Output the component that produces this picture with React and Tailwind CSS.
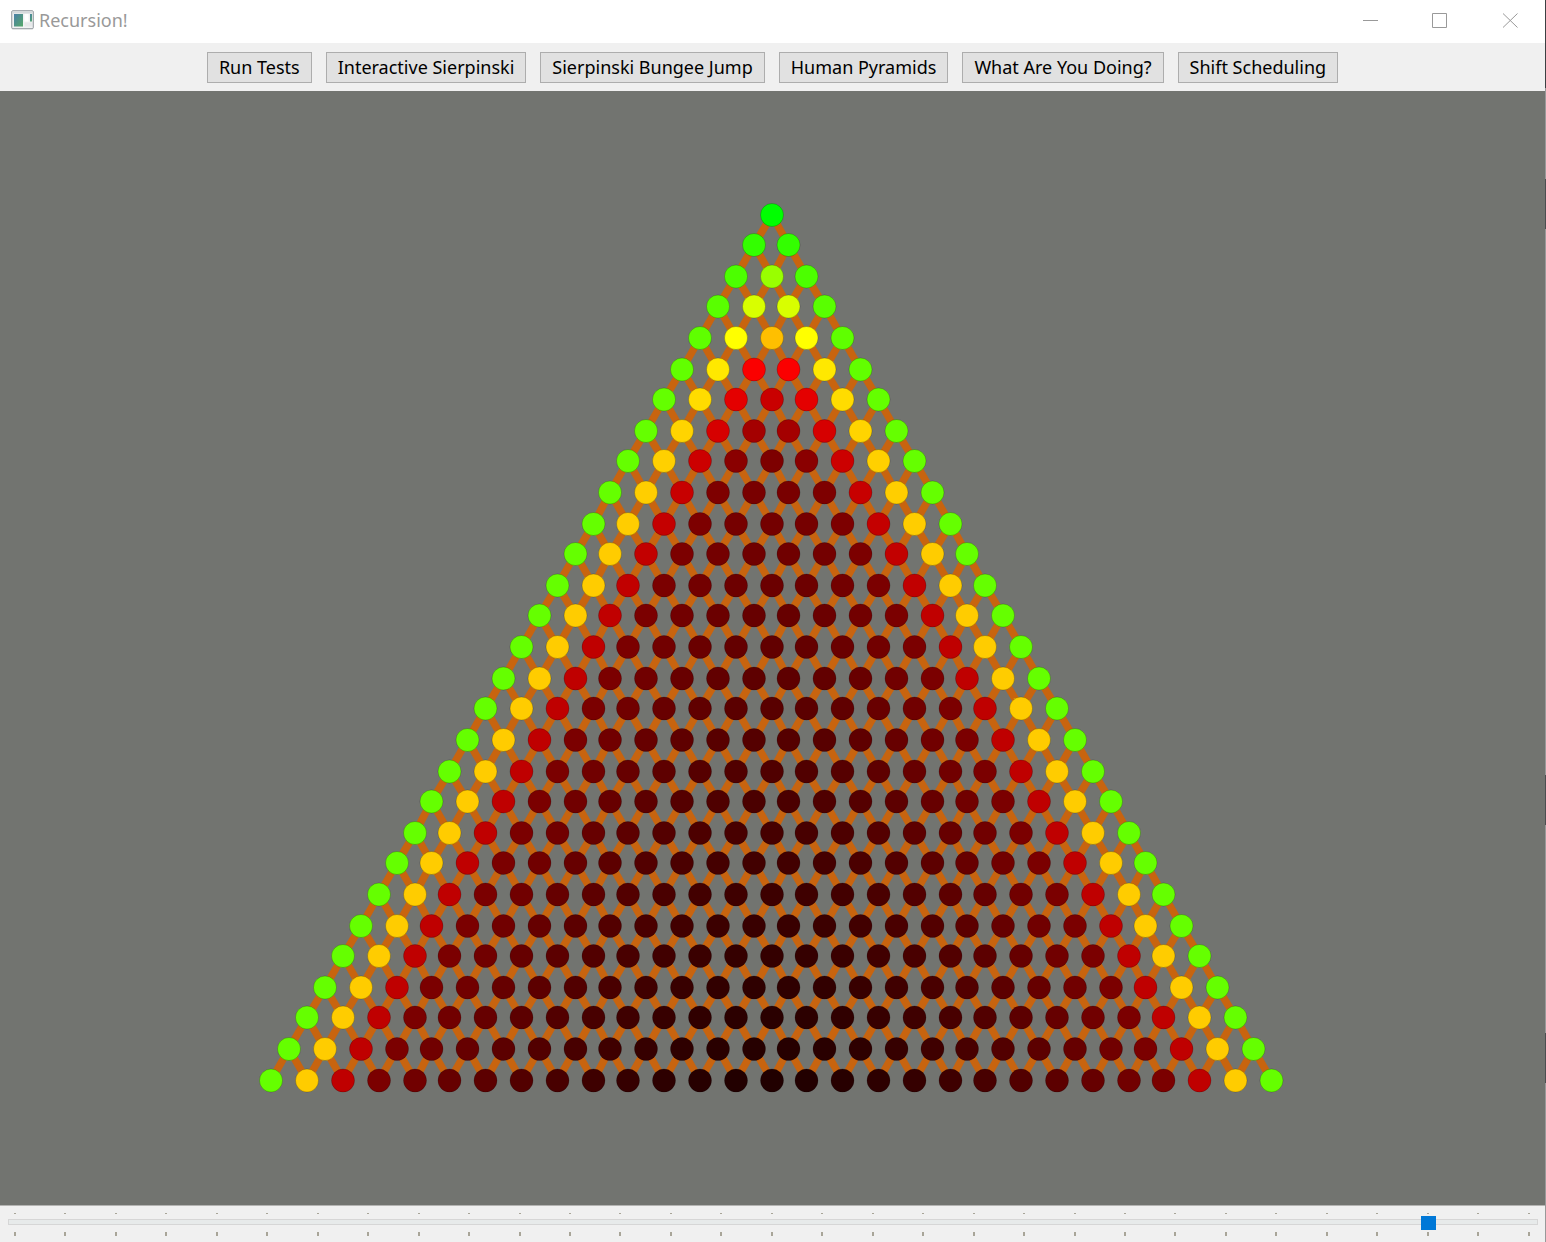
const ACTIONS = [
  'Run Tests',
  'Interactive Sierpinski',
  'Sierpinski Bungee Jump',
  'Human Pyramids',
  'What Are You Doing?',
  'Shift Scheduling',
];

const MAX_ROWS = 30;
const ROWS = 28;

// Weight carried by each person, in multiples of one body weight.
function computeLoads(rows) {
  const loads = [[0]];
  for (let r = 1; r <= rows; r++) {
    const above = loads[r - 1];
    const row = [];
    for (let c = 0; c <= r; c++) {
      const left = c > 0 ? (1 + above[c - 1]) / 2 : 0;
      const right = c < r ? (1 + above[c]) / 2 : 0;
      row.push(left + right);
    }
    loads.push(row);
  }
  return loads;
}

function loadColor(load) {
  if (load <= 2.5) return `rgb(${Math.floor((load / 2.5) * 255)}, 255, 0)`;
  if (load <= 3.75) return `rgb(255, ${Math.floor(255 - ((load - 2.5) / 1.25) * 127)}, 0)`;
  if (load <= 6.25) return `rgb(${Math.floor(255 - ((load - 3.75) / 2.5) * 127)}, 0, 0)`;
  return `rgb(${Math.max(0, Math.floor(127 - ((load - 6.25) / 25) * 127))}, 0, 0)`;
}

// Positions snap to a 1.5x pixel grid.
function nodePosition(r, c) {
  const k = 2 * c - r;
  return {
    x: 772 + 1.5 * (12 * k - Math.ceil(k / 10)),
    y: 124 + 1.5 * Math.floor(20.613 * r),
  };
}

function Pyramid() {
  const nodes = computeLoads(ROWS).flatMap((row, r) =>
    row.map((load, c) => ({ r, c, load, ...nodePosition(r, c) }))
  );
  const links = nodes
    .filter((n) => n.r < ROWS)
    .flatMap((n) => [n.c, n.c + 1].map((c) => ({ from: n, to: nodePosition(n.r + 1, c) })));

  return (
    <svg viewBox="0 0 1545 1114" className="h-full w-full" role="img" aria-label="Human pyramid">
      <g stroke="#c8640f" strokeWidth="7.5">
        {links.map(({ from, to }, i) => (
          <line key={i} x1={from.x} y1={from.y} x2={to.x} y2={to.y} />
        ))}
      </g>
      {nodes.map((n) => (
        <g key={`${n.r}-${n.c}`}>
          <circle cx={n.x} cy={n.y} r="11.5" fill={loadColor(n.load)} />
          <circle cx={n.x} cy={n.y} r="11.5" fill="none" stroke="#000" strokeOpacity="0.2" strokeWidth="1" />
        </g>
      ))}
    </svg>
  );
}

function AppIcon() {
  return (
    <svg width="24" height="20" viewBox="0 0 24 20" aria-hidden="true">
      <defs>
        <linearGradient id="pane" x1="0" y1="0" x2="1" y2="1">
          <stop offset="0" stopColor="#4a7fa8" />
          <stop offset="1" stopColor="#55a868" />
        </linearGradient>
      </defs>
      <rect x="0.75" y="0.75" width="21.5" height="18" rx="1" fill="#f1f2f3" stroke="#8b9298" />
      <rect x="1.5" y="1.5" width="20" height="2" fill="#d5d9dc" />
      <rect x="3" y="4" width="9" height="12.5" fill="url(#pane)" />
      <rect x="13.5" y="4" width="4" height="7.5" fill="#fff" />
      <rect x="19" y="4" width="2" height="7.5" fill="url(#pane)" />
      <rect x="13.5" y="12.5" width="7.5" height="4" fill="#e6e8ea" />
    </svg>
  );
}

function TitleBar() {
  return (
    <header className="flex h-[43px] shrink-0 items-center justify-between bg-white pb-[3px] pl-[11px]">
      <div className="flex items-center gap-1">
        <AppIcon />
        <h1 className="text-[18px] leading-6 text-[#999]">Recursion!</h1>
      </div>
      <div className="flex text-[#999]">
        <button type="button" aria-label="Minimize" className="flex h-8 w-[70px] items-center justify-center">
          <svg width="16" height="16" viewBox="0 0 16 16" stroke="currentColor" fill="none">
            <path d="M1 8.5H16" />
          </svg>
        </button>
        <button type="button" aria-label="Maximize" className="flex h-8 w-[70px] items-center justify-center">
          <svg width="16" height="16" viewBox="0 0 16 16" stroke="currentColor" fill="none">
            <path d="M0.5 1.5H14.5V15.5H0.5Z" />
          </svg>
        </button>
        <button type="button" aria-label="Close" className="flex h-8 w-[70px] items-center justify-center">
          <svg width="16" height="16" viewBox="0 0 16 16" stroke="currentColor" fill="none">
            <path d="M1 1.5L15.5 15.5M15.5 1.5L1 15.5" />
          </svg>
        </button>
      </div>
    </header>
  );
}

function RowSlider() {
  const ticks = Array.from({ length: MAX_ROWS + 1 }, (_, i) => i);
  return (
    <footer className="flex h-[37px] shrink-0 flex-col border-t border-[#b4b4b2] bg-[#f0f0f0] pt-[7px] pr-[7px] pl-2">
      <div className="flex justify-between pr-2 pl-[6px]" aria-hidden="true">
        {ticks.map((i) => (
          <span key={i} className="h-px w-[2px] bg-[#a8a598]" />
        ))}
      </div>
      <input
        type="range"
        aria-label="Pyramid rows"
        min="0"
        max={MAX_ROWS}
        defaultValue={ROWS}
        className="mt-px block h-[14px] w-full appearance-none bg-transparent [&::-webkit-slider-runnable-track]:h-[6px] [&::-webkit-slider-runnable-track]:border [&::-webkit-slider-runnable-track]:border-[#d6d6d6] [&::-webkit-slider-runnable-track]:bg-[#e7eaea] [&::-webkit-slider-thumb]:-mt-[4px] [&::-webkit-slider-thumb]:h-[14px] [&::-webkit-slider-thumb]:w-[15px] [&::-webkit-slider-thumb]:appearance-none [&::-webkit-slider-thumb]:bg-[#0078d7]"
      />
      <div className="mt-[3px] flex justify-between pr-2 pl-[6px]" aria-hidden="true">
        {ticks.map((i) => (
          <span key={i} className="h-1 w-[2px] bg-[#a8a598]" />
        ))}
      </div>
    </footer>
  );
}

// Sliver of desktop behind the window's right edge.
function DesktopEdge() {
  return (
    <div className="flex w-px flex-col bg-[#999]" aria-hidden="true">
      <div className="h-[88px] bg-[#3c4043]" />
      <div className="mt-[91px] h-[50px] bg-[#4c4e50]" />
      <div className="mt-[546px] h-[50px] bg-[#4c4e50]" />
      <div className="mt-[208px] h-[50px] bg-[#4c4e50]" />
    </div>
  );
}

export default function App() {
  return (
    <div className="flex h-screen font-['Noto_Sans','Open_Sans',sans-serif]">
      <div className="flex min-w-0 flex-1 flex-col">
        <TitleBar />
        <nav className="flex h-12 shrink-0 items-center justify-center gap-[14px] bg-[#f0f0f0]">
          {ACTIONS.map((label) => (
            <button
              key={label}
              type="button"
              className="h-[31px] border border-[#adadad] bg-[#e1e1e1] px-[11px] text-[18px] leading-6 whitespace-nowrap text-black"
            >
              {label}
            </button>
          ))}
        </nav>
        <main className="min-h-0 flex-1 bg-[#727470]">
          <Pyramid />
        </main>
        <RowSlider />
      </div>
      <DesktopEdge />
    </div>
  );
}
